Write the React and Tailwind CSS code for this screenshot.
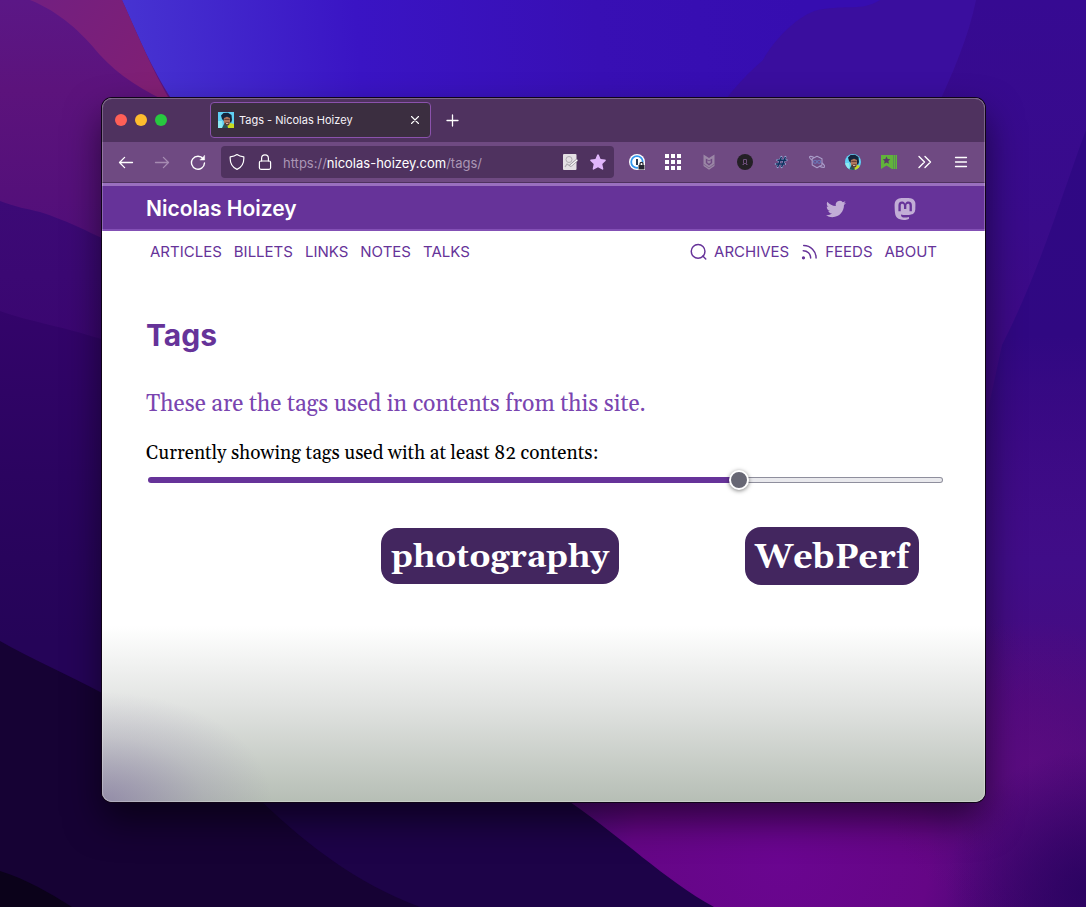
import { useState } from "react";

function Wallpaper() {
  return (
    <svg
      className="absolute inset-0 h-full w-full"
      viewBox="0 0 1086 907"
      preserveAspectRatio="none"
      aria-hidden="true"
    >
      <defs>
        <linearGradient id="sky" x1="120" y1="60" x2="800" y2="0" gradientUnits="userSpaceOnUse">
          <stop offset="0" stopColor="#4734d2" />
          <stop offset="0.35" stopColor="#3a14c4" />
          <stop offset="0.7" stopColor="#380fb4" />
          <stop offset="1" stopColor="#360db0" />
        </linearGradient>
        <linearGradient id="left" x1="0" y1="0" x2="0" y2="300" gradientUnits="userSpaceOnUse">
          <stop offset="0" stopColor="#5b1786" />
          <stop offset="0.3" stopColor="#5c137c" />
          <stop offset="1" stopColor="#4d0d78" />
        </linearGradient>
        <linearGradient id="red" x1="40" y1="0" x2="170" y2="100" gradientUnits="userSpaceOnUse">
          <stop offset="0" stopColor="#731f80" />
          <stop offset="1" stopColor="#821f72" />
        </linearGradient>
        <linearGradient id="plum" x1="0" y1="200" x2="0" y2="350" gradientUnits="userSpaceOnUse">
          <stop offset="0" stopColor="#3c0a76" />
          <stop offset="1" stopColor="#3a0670" />
        </linearGradient>
        <linearGradient id="indigo" x1="0" y1="310" x2="0" y2="640" gradientUnits="userSpaceOnUse">
          <stop offset="0" stopColor="#33046a" />
          <stop offset="0.5" stopColor="#2b0460" />
          <stop offset="1" stopColor="#250458" />
        </linearGradient>
        <linearGradient id="right" x1="0" y1="0" x2="0" y2="907" gradientUnits="userSpaceOnUse">
          <stop offset="0" stopColor="#360a92" />
          <stop offset="0.25" stopColor="#390b8a" />
          <stop offset="0.45" stopColor="#400984" />
          <stop offset="0.62" stopColor="#400d88" />
          <stop offset="0.85" stopColor="#4c0a7c" />
          <stop offset="1" stopColor="#3a0568" />
        </linearGradient>
        <linearGradient id="edge" x1="0" y1="130" x2="0" y2="540" gradientUnits="userSpaceOnUse">
          <stop offset="0" stopColor="#2f0884" />
          <stop offset="0.5" stopColor="#300882" />
          <stop offset="1" stopColor="#3a0c86" stopOpacity="0" />
        </linearGradient>
        <radialGradient id="magenta" cx="780" cy="860" r="330" gradientUnits="userSpaceOnUse">
          <stop offset="0" stopColor="#6a0590" />
          <stop offset="0.45" stopColor="#650686" />
          <stop offset="1" stopColor="#4a0a7c" stopOpacity="0" />
        </radialGradient>
        <radialGradient id="glow" cx="1030" cy="770" r="150" gradientUnits="userSpaceOnUse">
          <stop offset="0" stopColor="#5a0c80" />
          <stop offset="1" stopColor="#5a0a7c" stopOpacity="0" />
        </radialGradient>
        <radialGradient id="corner" cx="1086" cy="890" r="140" gradientUnits="userSpaceOnUse">
          <stop offset="0" stopColor="#2c0362" />
          <stop offset="1" stopColor="#2c0362" stopOpacity="0" />
        </radialGradient>
      </defs>
      <rect width="1086" height="907" fill="url(#sky)" />
      <path d="M720 107C740 80 752 70 763 60C775 38 800 14 818 10C850 4 860 12 880 0H1086V300H720Z" fill="#3a0e9e" />
      <path d="M500 907V300H850C900 170 960 80 976 0H1086V907Z" fill="url(#right)" />
      <path d="M1086 130C1060 200 1040 270 1002 345L960 540H1086Z" fill="url(#edge)" />
      <rect x="450" y="500" width="636" height="407" fill="url(#magenta)" />
      <rect x="880" y="600" width="206" height="307" fill="url(#glow)" />
      <rect x="940" y="740" width="146" height="167" fill="url(#corner)" />
      <path d="M0 0H122C140 40 150 65 172 100L190 130V500H0Z" fill="url(#left)" />
      <path d="M30 0H122C140 40 150 65 172 104C145 92 118 75 100 55C82 33 60 12 30 0Z" fill="url(#red)" />
      <path d="M0 201C15 207 28 209 40 212C65 220 85 230 110 242V500H0Z" fill="url(#plum)" />
      <path d="M0 311C30 322 60 325 120 345V700H0Z" fill="url(#indigo)" />
      <path d="M240 780H545L570 802C620 836 665 880 714 907H240Z" fill="#1d0348" />
      <path d="M0 641C30 658 70 676 102 693L240 780L262 802C310 847 355 882 420 907H0Z" fill="#160234" />
      <path d="M0 871C28 880 48 892 72 907H0Z" fill="#0b021a" />
    </svg>
  );
}

function Portrait({ round }) {
  return (
    <svg viewBox="0 0 16 16" className={round ? "size-4 rounded-full" : "size-4"} aria-hidden="true">
      <rect width="16" height="16" fill="#5fd0f4" />
      <path d="M0 9H4L5 16H0Z" fill="#8deaf2" />
      <path d="M7 16L9 14L12 11L16 12V16Z" fill="#c9dc1e" />
      <path d="M4 16L6 12H9L10 16Z" fill="#27555a" />
      <path d="M5 5H12.5V9L11 13L8 13.5L6 11Z" fill="#b0765c" />
      <path d="M3 3.5L5.5 1L10 0.8L13.5 3L14 8L13 11L12 10L12 6L9 4.8L6 6L5.6 9L4 7Z" fill="#14243c" />
      <path d="M6.4 7.4H11.6" stroke="#5c3630" strokeWidth="0.9" />
      <path d="M6.2 11L8.5 10.6L11.6 10.2L11 13L8.6 13.8L6.8 12.6Z" fill="#53352f" />
      <path d="M8 11.6H10.4" stroke="#ecd2c4" strokeWidth="0.9" />
    </svg>
  );
}

const line = { fill: "none", stroke: "currentColor", strokeLinecap: "round", strokeLinejoin: "round" };

function Glyph({ className = "size-4", children, width = 1.3 }) {
  return (
    <svg viewBox="0 0 16 16" className={className} strokeWidth={width} {...line} aria-hidden="true">
      {children}
    </svg>
  );
}

function IconButton({ label, className = "", children }) {
  return (
    <button type="button" aria-label={label} className={`flex size-5 shrink-0 items-center justify-center ${className}`}>
      {children}
    </button>
  );
}

function TabBar() {
  return (
    <div className="flex h-11 items-center bg-[#4f325f]">
      <div className="flex gap-2 pl-[13px]">
        <button type="button" aria-label="Close window" className="size-3 rounded-full bg-[#ff5f57]" />
        <button type="button" aria-label="Minimise window" className="size-3 rounded-full bg-[#febc2e]" />
        <button type="button" aria-label="Zoom window" className="size-3 rounded-full bg-[#28c840]" />
      </div>
      <div className="ml-[43px] flex h-9 w-[221px] items-center rounded border border-[#8b52ad] bg-[#3b2e40] px-[7px]">
        <Portrait />
        <span className="ml-[5px] flex-1 truncate text-[11px] leading-4 text-[#f6f2f8]">Tags - Nicolas Hoizey</span>
        <button type="button" aria-label="Close tab" className="flex size-4 items-center justify-center text-white">
          <Glyph width={1.1}><path d="M4.5 4.5L11.5 11.5M11.5 4.5L4.5 11.5" /></Glyph>
        </button>
      </div>
      <IconButton label="New tab" className="ml-3 text-white">
        <Glyph><path d="M7.5 3V14M2 8.5H13" /></Glyph>
      </IconButton>
    </div>
  );
}

function Toolbar() {
  return (
    <div className="flex h-[41px] items-center border-b border-[#4f325f] bg-[#6f4a82] px-[14px] text-white">
      <div className="flex gap-4">
        <IconButton label="Back">
          <Glyph><path d="M14.5 8.5H1.5M6.6 3.4L1.5 8.5L6.6 13.6" /></Glyph>
        </IconButton>
        <IconButton label="Forward" className="text-[#a68bb2]">
          <Glyph><path d="M1.5 8.5H14.5M9.4 3.4L14.5 8.5L9.4 13.6" /></Glyph>
        </IconButton>
        <IconButton label="Reload">
          <Glyph width={1.4}>
            <path d="M13.2 4.8A6.5 6.5 0 1 0 14.5 9" />
            <path d="M14.6 1.6V6H10.2Z" fill="currentColor" strokeWidth="0.5" />
          </Glyph>
        </IconButton>
      </div>
      <div className="ml-[13px] flex h-8 min-w-0 flex-1 items-center gap-2 rounded bg-[#4f325f] px-[6px]">
        <IconButton label="Tracking protection">
          <Glyph width={1.2}><path d="M8 0.6C10 2 12.5 2.6 14.8 2.9C15.2 9 12.5 13.5 8 15.4C3.5 13.5 0.8 9 1.2 2.9C3.5 2.6 6 2 8 0.6Z" /></Glyph>
        </IconButton>
        <IconButton label="Site information">
          <Glyph width={1.2}><rect x="2.4" y="7" width="11.2" height="8.3" rx="1.5" /><path d="M4.6 7V4.2A3.4 3.4 0 0 1 11.4 4.2V7" /></Glyph>
        </IconButton>
        <a href="https://nicolas-hoizey.com/tags/" className="flex-1 truncate pt-[2px] text-[13px] leading-5 text-[#ab96b5]">
          https://<span className="text-white">nicolas-hoizey.com</span>/tags/
        </a>
        <IconButton label="Annotate page">
          <svg viewBox="0 0 16 16" className="size-4" aria-hidden="true">
            <rect x="1" y="0" width="13.5" height="16" rx="1" fill="#e4e0e4" />
            <circle cx="7" cy="5.5" r="3" fill="none" stroke="#b0acb2" />
            <path d="M3 13L5 10L8 12" fill="none" stroke="#b0acb2" strokeWidth="1.2" />
            <path d="M8 12L15 6" stroke="#8d8890" strokeWidth="2.4" />
            <path d="M8.4 11.8L15.4 5.8" stroke="#fff" strokeWidth="1.2" />
          </svg>
        </IconButton>
        <IconButton label="Bookmarked" className="text-[#e0b5fb]">
          <svg viewBox="0 0 16 16" className="size-4" fill="currentColor" aria-hidden="true">
            <path d="M7.2 0.8Q8 -0.5 8.8 0.8L10.6 5L15 5.5Q16.4 5.8 15.5 6.9L12.3 10L13.3 14.7Q13.4 16 12.2 15.6L8 13.2L3.8 15.6Q2.6 16 2.7 14.7L3.7 10L0.5 6.9Q-0.4 5.8 1 5.5L5.4 5Z" />
          </svg>
        </IconButton>
      </div>
      <div className="ml-[13px] flex gap-4">
        <IconButton label="Password manager">
          <svg viewBox="0 0 16 16" className="size-4" aria-hidden="true">
            <circle cx="8" cy="8" r="8" fill="#fff" />
            <circle cx="8" cy="8" r="5.8" fill="#fff" stroke="#3297ef" strokeWidth="1.8" />
            <path d="M8 5V11" stroke="#263a54" strokeWidth="2" />
            <path d="M9 8.5H16V16H9Z" fill="#fff" />
            <rect x="9.5" y="11" width="6" height="4.5" fill="#262630" />
            <path d="M11 11V9.8A1.5 1.5 0 0 1 14 9.8V11" fill="none" stroke="#262630" strokeWidth="1.2" />
          </svg>
        </IconButton>
        <IconButton label="Apps">
          <svg viewBox="0 0 16 16" className="size-4" fill="#fff" aria-hidden="true">
            {[0, 6, 12].map((y) => [0, 6, 12].map((x) => <rect key={`${x}-${y}`} x={x} y={y} width="4" height="4" />))}
          </svg>
        </IconButton>
        <IconButton label="Shield extension">
          <svg viewBox="0 0 16 16" className="size-4" aria-hidden="true">
            <path d="M2.5 0.5L8 4L13.5 0.5V12L8 15.8L2.5 12Z" fill="#9b86a6" />
            <path d="M4.8 4.5L8 6.5L11.2 4.5V9L8 11.5L4.8 9Z" fill="#6f4a82" />
            <path d="M6.3 6.2L8 7.2L9.7 6.2V8.6L8 9.8L6.3 8.6Z" fill="#9b86a6" />
            <path d="M2.5 10L8 13.8L13.5 10" fill="none" stroke="#7c6389" strokeWidth="0.9" />
          </svg>
        </IconButton>
        <IconButton label="Black disc extension">
          <svg viewBox="0 0 16 16" className="size-4" aria-hidden="true">
            <circle cx="8" cy="8" r="8" fill="#242026" />
            <path d="M6.5 5.5H9.5V9.5H6.5ZM5.5 10.5H7M9 10.5H10.5" fill="none" stroke="#6d4f7a" />
          </svg>
        </IconButton>
        <IconButton label="Hash extension">
          <svg viewBox="0 0 16 16" className="size-4" fill="none" aria-hidden="true">
            <path d="M8.4 3L4.6 13M12.4 3L8.6 13M4.4 6.2H13.5M2.8 10H12" stroke="#93a3cf" strokeWidth="2.2" strokeLinecap="round" />
            <path d="M8.4 3L4.6 13M12.4 3L8.6 13M4.4 6.2H13.5M2.8 10H12" stroke="#102f5e" strokeWidth="1.4" />
          </svg>
        </IconButton>
        <IconButton label="Planet extension" className="text-[#a99cc8]">
          <Glyph width={1.1}>
            <path d="M8 2.2L13 4.8V11L8 13.8L3.2 11V4.8Z" />
            <path d="M2.8 6C0.5 4.4 -0.2 2.6 1.4 2.4C3 2.3 4 3 5 3.5M13 9C16 11.2 16.4 13.2 14.8 13.4C13 13.5 11.5 12.8 10.5 12.3" />
            <g stroke="#6a74b4"><circle cx="6.1" cy="7.8" r="1.6" /><circle cx="10.1" cy="7.8" r="1.6" /></g>
          </Glyph>
        </IconButton>
        <IconButton label="Profile"><Portrait round /></IconButton>
        <IconButton label="Reading list">
          <svg viewBox="0 0 16 16" className="size-4" aria-hidden="true">
            <path d="M0 1H11V15L5.5 11.5L0 15Z" fill="#61b33b" />
            <path d="M11 1H16V15H11Z" fill="#5a8f52" />
            <path d="M11 1H12V15H11ZM13 1H14V15H13ZM15 1H16V15H15Z" fill="#61b33b" />
            <path d="M5.5 2.4L6.7 5L9.3 5.3L7.4 7L7.9 9.8L5.5 8.4L3.1 9.8L3.6 7L1.7 5.3L4.3 5Z" fill="#5a3a68" />
          </svg>
        </IconButton>
        <IconButton label="More tools">
          <Glyph width={1.4}><path d="M2 2.5L7.5 8L2 13.5M8 2.5L13.5 8L8 13.5" /></Glyph>
        </IconButton>
        <IconButton label="Application menu">
          <Glyph><path d="M2.5 3.5H13.5M2.5 8H13.5M2.5 12.5H13.5" /></Glyph>
        </IconButton>
      </div>
    </div>
  );
}

function SiteHeader() {
  return (
    <header className="flex h-12 items-center border-t-[3px] border-b-2 border-t-[#9a70bf] border-b-[#8350b5] bg-[#663399] pt-[2px] pr-[69px] pl-11">
      <a href="/" className="flex-1 text-[21px] leading-7 font-semibold text-white">Nicolas Hoizey</a>
      <div className="flex items-center gap-12 text-[#c2add6]">
        <a href="https://twitter.com/nhoizey" aria-label="Twitter">
          <svg viewBox="0 0 24 24" className="size-5" fill="currentColor" aria-hidden="true">
            <path d="M23.953 4.57a10 10 0 01-2.825.775 4.958 4.958 0 002.163-2.723c-.951.555-2.005.959-3.127 1.184a4.92 4.92 0 00-8.384 4.482C7.69 8.095 4.067 6.13 1.64 3.162a4.822 4.822 0 00-.666 2.475c0 1.71.87 3.213 2.188 4.096a4.904 4.904 0 01-2.228-.616v.06a4.923 4.923 0 003.946 4.827 4.996 4.996 0 01-2.212.085 4.936 4.936 0 004.604 3.417 9.867 9.867 0 01-6.102 2.105c-.39 0-.779-.023-1.17-.067a13.995 13.995 0 007.557 2.209c9.053 0 13.998-7.496 13.998-13.985 0-.21 0-.42-.015-.63A9.935 9.935 0 0024 4.59z" />
          </svg>
        </a>
        <a href="https://mamot.fr/@nhoizey" aria-label="Mastodon">
          <svg viewBox="0 0 24 24" className="size-[22px]" fill="currentColor" aria-hidden="true">
            <path d="M23.268 5.313c-.35-2.578-2.617-4.61-5.304-5.004C17.51.242 15.792 0 11.813 0h-.03c-3.98 0-4.835.242-5.288.309C3.882.692 1.496 2.518.917 5.127.64 6.412.61 7.837.661 9.143c.074 1.874.088 3.745.26 5.611.118 1.24.325 2.47.62 3.68.55 2.237 2.777 4.098 4.96 4.857 2.336.792 4.849.923 7.256.38.265-.061.527-.132.786-.213.585-.184 1.27-.39 1.774-.753a.057.057 0 0 0 .023-.043v-1.809a.052.052 0 0 0-.02-.041.053.053 0 0 0-.046-.01 20.282 20.282 0 0 1-4.709.545c-2.73 0-3.463-1.284-3.674-1.818a5.593 5.593 0 0 1-.319-1.433.053.053 0 0 1 .066-.054c1.517.363 3.072.546 4.632.546.376 0 .75 0 1.125-.01 1.57-.044 3.224-.124 4.768-.422.038-.008.077-.015.11-.024 2.435-.464 4.753-1.92 4.989-5.604.008-.145.03-1.52.03-1.67.002-.512.167-3.63-.024-5.545zm-3.748 9.195h-2.561V8.29c0-1.309-.55-1.976-1.67-1.976-1.23 0-1.846.79-1.846 2.35v3.403h-2.546V8.663c0-1.56-.617-2.35-1.848-2.35-1.112 0-1.668.668-1.67 1.977v6.218H4.822V8.102c0-1.31.337-2.35 1.011-3.12.696-.77 1.608-1.164 2.74-1.164 1.311 0 2.302.5 2.962 1.498l.638 1.06.638-1.06c.66-.999 1.65-1.498 2.96-1.498 1.13 0 2.043.395 2.74 1.164.675.77 1.012 1.81 1.012 3.12z" />
          </svg>
        </a>
      </div>
    </header>
  );
}

function SiteNav() {
  return (
    <nav className="flex h-[42px] items-center justify-between px-12 text-[15px] leading-5 text-[#663399]">
      <div className="flex gap-3">
        <a href="/articles/">ARTICLES</a>
        <a href="/billets/">BILLETS</a>
        <a href="/links/">LINKS</a>
        <a href="/notes/">NOTES</a>
        <a href="/talks/">TALKS</a>
      </div>
      <div className="flex gap-3">
        <a href="/archives/" className="flex items-center gap-[6px]">
          <Glyph className="size-[18px]" width={1.3}><circle cx="7.2" cy="7.4" r="6.1" /><path d="M11.4 11.6L14 14.2" /></Glyph>
          ARCHIVES
        </a>
        <a href="/feeds/" className="flex items-center gap-[6px]">
          <Glyph className="size-[18px]" width={1.3}>
            <path d="M2 6.8A6.6 6.6 0 0 1 8.6 13.4M2.4 2.2A11 11 0 0 1 13.4 13.4" />
            <circle cx="2.2" cy="13.2" r="0.8" fill="currentColor" />
          </Glyph>
          FEEDS
        </a>
        <a href="/about/">ABOUT</a>
      </div>
    </nav>
  );
}

function TagThreshold() {
  const min = 1;
  const max = 109;
  const [value, setValue] = useState(82);
  const fill = ((value - min) / (max - min)) * 100;
  return (
    <div className="mt-[18px]">
      <label htmlFor="threshold" className="block text-[19px] leading-7 text-black">
        Currently showing tags used with at least {value} contents:
      </label>
      <input
        id="threshold"
        type="range"
        min={min}
        max={max}
        value={value}
        onChange={(event) => setValue(Number(event.target.value))}
        style={{ "--fill": `${fill}%` }}
        className="mx-[2px] mt-[3px] block h-5 w-[calc(100%-4px)] appearance-none bg-transparent [&::-webkit-slider-runnable-track]:h-[6px] [&::-webkit-slider-runnable-track]:rounded-full [&::-webkit-slider-runnable-track]:border [&::-webkit-slider-runnable-track]:border-transparent [&::-webkit-slider-runnable-track]:[background:linear-gradient(#663399,#663399)_left/var(--fill)_100%_no-repeat_border-box,linear-gradient(#e9e9ed,#e9e9ed)_padding-box,linear-gradient(#8f8f9d,#8f8f9d)_border-box] [&::-webkit-slider-thumb]:-mt-2 [&::-webkit-slider-thumb]:size-5 [&::-webkit-slider-thumb]:appearance-none [&::-webkit-slider-thumb]:rounded-full [&::-webkit-slider-thumb]:border-2 [&::-webkit-slider-thumb]:border-white [&::-webkit-slider-thumb]:bg-[#676774] [&::-webkit-slider-thumb]:shadow-[0_1px_4px_rgba(0,0,0,0.5)]"
      />
    </div>
  );
}

export default function App() {
  return (
    <div className="relative isolate flex min-h-screen flex-col overflow-hidden bg-[#2c088c] pt-[98px] pr-[101px] pb-[105px] pl-[102px] font-['Inter','Liberation_Sans',sans-serif]">
      <Wallpaper />
      <div className="relative flex flex-1 flex-col overflow-hidden rounded-[10px] bg-white shadow-[0_0_0_1px_#100418,0_18px_36px_rgba(0,0,0,0.55)]">
        <TabBar />
        <Toolbar />
        <SiteHeader />
        <SiteNav />
        <main className="flex-1 pt-[42px] pr-10 pb-10 pl-11 font-['Gelasio','Georgia','Liberation_Serif',serif]">
          <h1 className="font-['Inter','Liberation_Sans',sans-serif] text-[30px] leading-10 font-bold text-[#663399]">Tags</h1>
          <p className="mt-[34px] text-[23px] leading-8 text-[#7a45b0]">These are the tags used in contents from this site.</p>
          <TagThreshold />
          <div className="mt-[37px] flex flex-wrap items-center justify-end gap-[126px] pr-[26px] font-bold text-white">
            <a href="/tags/photography/" className="flex h-14 items-center rounded-2xl bg-[#43265f] px-[10px] pt-1 text-[33px]">photography</a>
            <a href="/tags/webperf/" className="flex h-[58px] items-center rounded-2xl bg-[#43265f] px-[10px] pt-1 text-[34px]">WebPerf</a>
          </div>
        </main>
        <div className="pointer-events-none absolute inset-x-0 bottom-0 h-44 bg-[radial-gradient(170px_110px_at_bottom_left,rgba(112,90,155,0.5),rgba(112,90,155,0.15)_60%,transparent),linear-gradient(to_bottom,transparent,#e1e3e1_45%,#b6beb5)]" />
        <div className="pointer-events-none absolute inset-0 rounded-[10px] border border-white/25" />
      </div>
    </div>
  );
}
